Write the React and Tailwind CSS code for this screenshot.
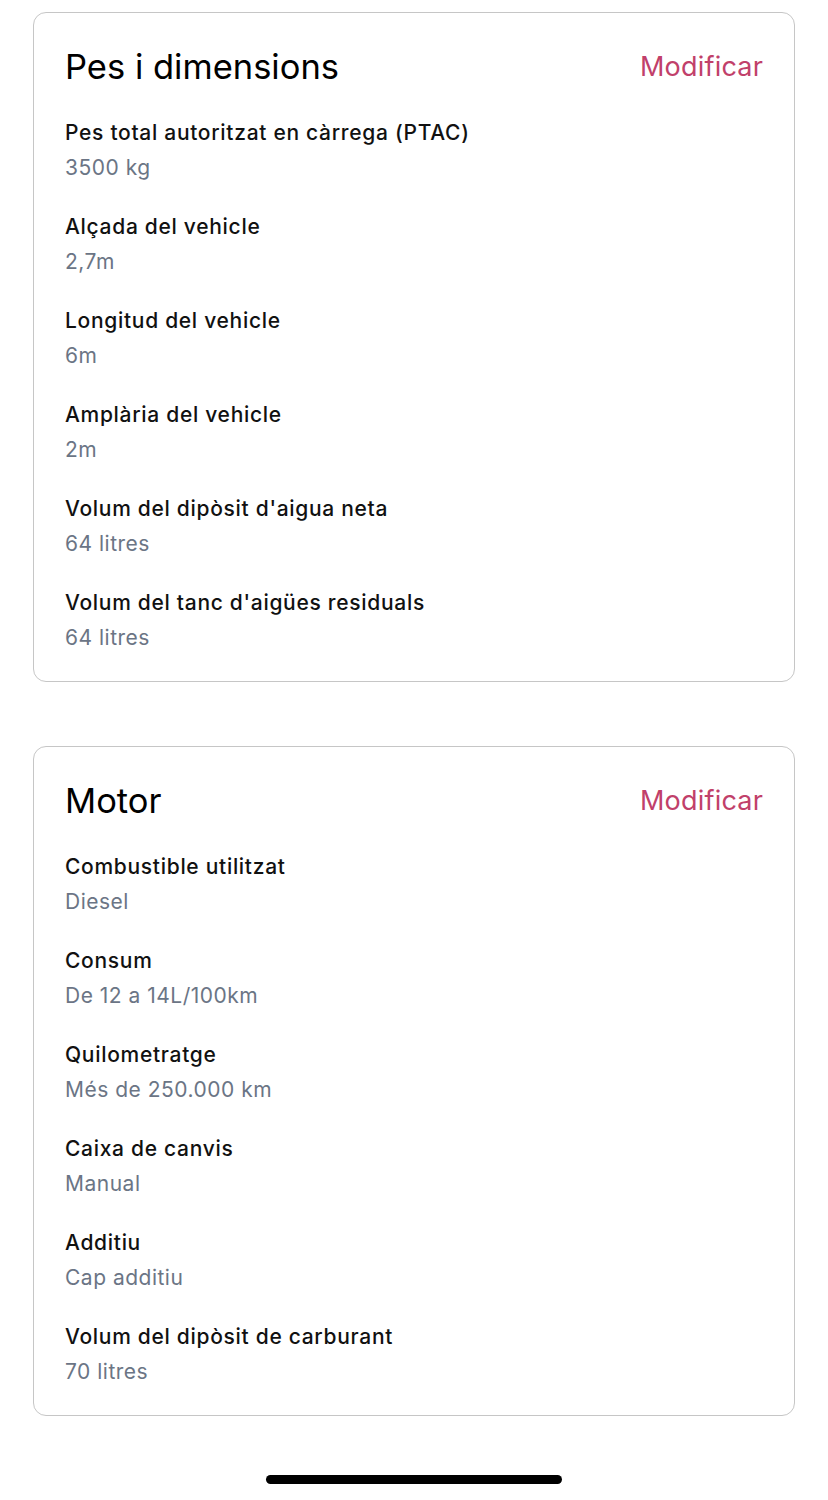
import React from 'react'

const sections = [
    {
        title: 'Pes i dimensions',
        rows: [
            ['Pes total autoritzat en càrrega (PTAC)', '3500 kg'],
            ['Alçada del vehicle', '2,7m'],
            ['Longitud del vehicle', '6m'],
            ['Amplària del vehicle', '2m'],
            ["Volum del dipòsit d'aigua neta", '64 litres'],
            ["Volum del tanc d'aigües residuals", '64 litres'],
        ],
    },
    {
        title: 'Motor',
        rows: [
            ['Combustible utilitzat', 'Diesel'],
            ['Consum', 'De 12 a 14L/100km'],
            ['Quilometratge', 'Més de 250.000 km'],
            ['Caixa de canvis', 'Manual'],
            ['Additiu', 'Cap additiu'],
            ['Volum del dipòsit de carburant', '70 litres'],
        ],
    },
]

const Card = ({ title, rows }) => (
    <div className="border-[1.5px] border-[#c6c6c6] rounded-[13px] bg-white pt-[34px] pb-[29px] px-[31px]">
        {/* header */}
        <div className="flex justify-between items-center h-[40px]">
            <h2 className="text-[34.5px] leading-[40px] text-black">{title}</h2>
            <button className="text-[27px] leading-[32px] text-[#c1406a] tracking-[0.2px]">Modificar</button>
        </div>
        <div className="mt-[32px] flex flex-col gap-[31px]">
            {rows.map(([label, value], index) => (
                <div key={index} className="flex flex-col gap-[7px]">
                    <p className="text-[21px] leading-[28px] font-medium tracking-[0.7px] text-[#111]">{label}</p>
                    <p className="text-[21px] leading-[28px] tracking-[0.5px] text-[#6b7585]">{value}</p>
                </div>
            ))}
        </div>
    </div>
)

const App = () => {
    return (
        <div className="w-[828px] h-[1500px] bg-white px-[33px] pt-[12px] flex flex-col" style={{ fontFamily: 'Inter, "Noto Sans", sans-serif' }}>
            <div className="flex flex-col gap-[64px]">
                {sections.map((s, i) => (
                    <Card key={i} title={s.title} rows={s.rows} />
                ))}
            </div>
            {/* home indicator */}
            <div className="mt-auto mb-[16px] flex justify-center">
                <div className="w-[296px] h-[9px] rounded-full bg-black"></div>
            </div>
        </div>
    )
}

export default App
